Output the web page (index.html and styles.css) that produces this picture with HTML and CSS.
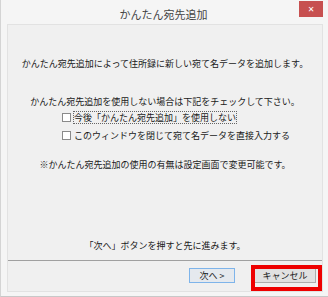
FILE: index.html
```html
<!DOCTYPE html>
<html lang="ja">
<head>
  <meta charset="UTF-8" />
  <title>かんたん宛先追加</title>
  <link rel="stylesheet" href="styles.css">
</head>
<body>
  <div class="window">
    <div class="titlebar">
      <span></span>
      <div class="title">かんたん宛先追加</div>
      <div class="close">✕</div>
    </div>

    <div class="client">
      <div class="content">
        <p class="line first">かんたん宛先追加によって住所録に新しい宛て名データを追加します。</p>
        <p class="line second">かんたん宛先追加を使用しない場合は下記をチェックして下さい。</p>
        <div class="checks">
          <label class="check"><span class="box"></span><span class="focus">今後「かんたん宛先追加」を使用しない</span></label>
          <label class="check"><span class="box"></span><span>このウィンドウを閉じて宛て名データを直接入力する</span></label>
        </div>
        <p class="line note">※かんたん宛先追加の使用の有無は設定画面で変更可能です。</p>
        <p class="line hint">「次へ」ボタンを押すと先に進みます。</p>
      </div>

      <div class="footer">
        <button class="btn default">次へ &gt;</button>
        <button class="btn cancel">キャンセル</button>
        <div class="highlight"></div>
      </div>
    </div>
  </div>
</body>
</html>
```

FILE: styles.css
```css
body {
  margin: 0;
  font-family: "Noto Sans CJK JP", "DejaVu Sans", sans-serif;
  font-size: 9px;
  color: #1a1a1a;
}

.window {
  width: 328px;
  height: 297px;
  box-sizing: border-box;
  background: #f5f5f5;
  border-left: 1px solid #d4d4d4;
  border-bottom: 1px solid #c8c8c8;
  display: flex;
  flex-direction: column;
}

.titlebar {
  height: 24px;
  display: grid;
  grid-template-columns: 1fr auto 1fr;
  align-items: start;
}

.title {
  font-size: 11px;
  color: #444;
  line-height: 14px;
  padding-top: 7px;
  margin-left: -2px;
}

.close {
  justify-self: end;
  margin: 1px 5px 0 0;
  width: 24px;
  height: 16px;
  background: #c75050;
  color: #fff;
  font-size: 8px;
  line-height: 16px;
  text-align: center;
}

.client {
  margin: 0 5px 0 6px;
  height: 266px;
  background: #f0f0f0;
  border: 1px solid #e2e2e2;
  display: flex;
  flex-direction: column;
}

.content {
  flex: 1;
  display: flex;
  flex-direction: column;
  align-items: center;
  padding-top: 33px;
  padding-bottom: 8px;
}

.line {
  margin: 0;
  line-height: 12px;
  white-space: nowrap;
}

.second {
  margin-top: 26px;
}

.checks {
  align-self: flex-start;
  margin-left: 54px;
  display: flex;
  flex-direction: column;
}

.check {
  display: flex;
  align-items: center;
  height: 18px;
  gap: 3px;
}

.box {
  width: 7px;
  height: 7px;
  border: 1px solid #8a8a8a;
  background: #fff;
}

.focus {
  outline: 1px dotted #666;
  line-height: 11px;
}

.note {
  margin-top: 15px;
}

.hint {
  margin-top: auto;
}

.footer {
  position: relative;
  height: 31px;
  border-top: 1px solid #a0a0a0;
  display: flex;
  justify-content: flex-end;
  align-items: flex-start;
  gap: 19px;
  padding: 7px 6px 0 0;
  box-sizing: border-box;
}

.btn {
  height: 15px;
  padding: 0;
  font-family: inherit;
  font-size: 9px;
  color: #1a1a1a;
  line-height: 13px;
  border: 1px solid #adadad;
  background: #e1e1e1;
}

.btn.default {
  width: 46px;
  border-color: #7eb4ea;
  background: #e5e9ee;
}

.btn.cancel {
  width: 62px;
}

.highlight {
  position: absolute;
  left: 243px;
  top: 4px;
  width: 63px;
  height: 18px;
  border: 4px solid #ee0000;
}
```
